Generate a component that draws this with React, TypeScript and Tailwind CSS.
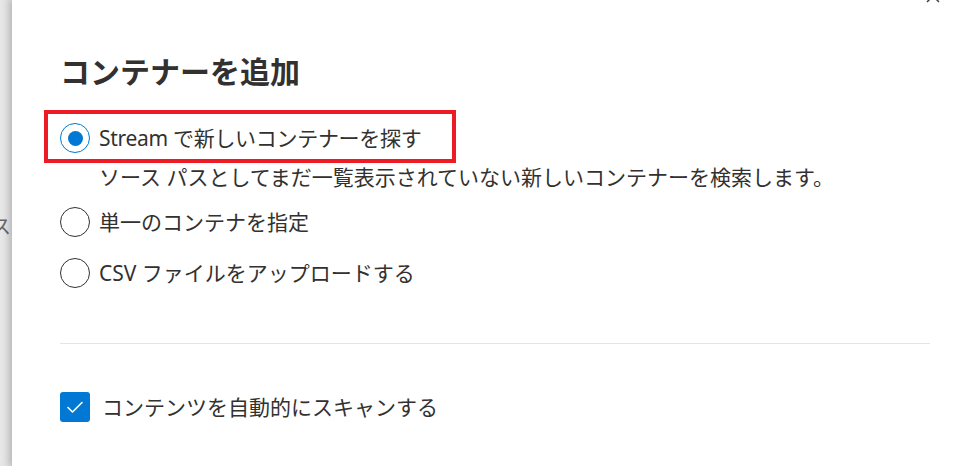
function Radio({ checked }: { checked?: boolean }) {
  return (
    <span
      className={
        checked
          ? 'flex h-[30px] w-[30px] shrink-0 items-center justify-center rounded-full border-[1.5px] border-[#0078d4] bg-white'
          : 'flex h-[30px] w-[30px] shrink-0 items-center justify-center rounded-full border-[1.5px] border-[#323130] bg-white'
      }
    >
      {checked && <span className="h-[15px] w-[15px] rounded-full bg-[#0078d4]" />}
    </span>
  )
}

export default function App() {
  return (
    <div className="flex h-[466px] w-[958px] overflow-hidden bg-white font-['Noto_Sans','Noto_Sans_CJK_JP',sans-serif] text-[#323130]">
      {/* page behind the panel */}
      <div className="relative w-[12px] shrink-0 overflow-hidden bg-gradient-to-r from-[#e8e8e8] to-[#dadada]">
        <span className="absolute left-[-9px] top-[212px] text-[20px] leading-[30px] text-[#666]">ス</span>
      </div>

      {/* panel */}
      <div className="relative z-10 flex flex-1 flex-col pl-[48px] pr-[28px] pt-[50px] shadow-[-3px_0_6px_rgba(0,0,0,0.15)]">
        <svg className="absolute left-[913px] top-[-12px] h-[16px] w-[16px]" viewBox="0 0 16 16" fill="none" stroke="#444" strokeWidth="1.5">
          <path d="M2 2l12 12M14 2L2 14" />
        </svg>

        <h1 className="text-[30px] font-bold leading-[44px] text-[#323130]">コンテナーを追加</h1>

        <div className="relative mt-[24px] flex h-[40px] items-center gap-[9px]">
          <div className="pointer-events-none absolute left-[-16px] top-[-8px] h-[53px] w-[412px] border-4 border-[#ed1c24]" />
          <Radio checked />
          <span className="text-[21px] leading-[30px] tracking-[-0.3px]">Stream で新しいコンテナーを探す</span>
        </div>
        <p className="mt-[4px] pl-[39px] text-[21px] leading-[30px]">
          ソース パスとしてまだ一覧表示されていない新しいコンテナーを検索します。
        </p>

        <div className="mt-[10px] flex h-[40px] items-center gap-[9px]">
          <Radio />
          <span className="text-[21px] leading-[30px]">単一のコンテナを指定</span>
        </div>
        <div className="mt-[11px] flex h-[40px] items-center gap-[9px]">
          <Radio />
          <span className="text-[21px] leading-[30px]">CSV ファイルをアップロードする</span>
        </div>

        <div className="mt-[50px] h-px bg-[#e5e5e5]" />

        <div className="mt-[43px] flex h-[40px] items-center gap-[12px]">
          <span className="flex h-[30px] w-[30px] shrink-0 items-center justify-center rounded-[3px] bg-[#0078d4]">
            <svg viewBox="0 0 20 20" className="h-[20px] w-[20px]" fill="none" stroke="white" strokeWidth="1.6" strokeLinecap="round" strokeLinejoin="round">
              <path d="M3 10.5l4.5 4.5L17 5.5" />
            </svg>
          </span>
          <span className="text-[21px] leading-[30px]">コンテンツを自動的にスキャンする</span>
        </div>
      </div>
    </div>
  )
}
